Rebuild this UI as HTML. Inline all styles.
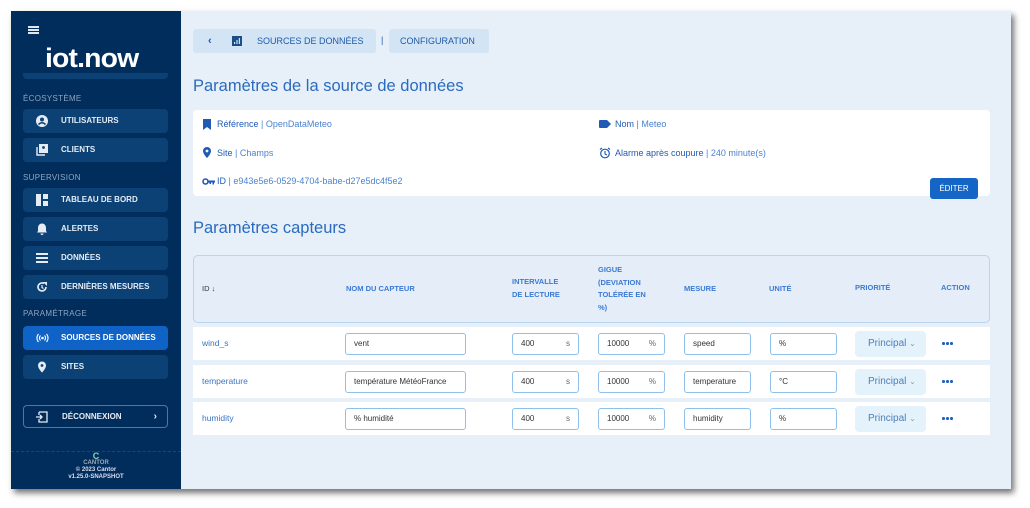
<!DOCTYPE html>
<html><head><meta charset="utf-8"><style>
*{box-sizing:border-box;margin:0;padding:0}
body{width:1030px;height:508px;background:#fff;font-family:"Liberation Sans",sans-serif;position:relative;overflow:hidden}
#frame{position:absolute;left:11px;top:11px;width:1000px;height:478px;background:#e7eff8;box-shadow:3px 4px 6px rgba(0,0,0,.55);overflow:hidden}
#side{position:absolute;left:0;top:0;width:170px;height:478px;background:#012d5c}
.a{position:absolute}
.nav{position:absolute;left:12px;width:145px;height:24px;background:#0c4176;border-radius:4px;color:#e6ecf4;font-size:8px;font-weight:bold;line-height:24px;padding-left:38px}
.nav svg{position:absolute;left:13px;top:6px}
.sec{position:absolute;left:12px;color:#8ea4bf;font-size:8px;letter-spacing:.3px}
.bc{position:absolute;top:18px;height:24px;background:#d3e5f5;border-radius:3px;color:#1d5aa8;font-size:9px;line-height:24px}
h2{position:absolute;font-weight:normal;font-size:16.5px;color:#2a6bc0}
.card{position:absolute;background:#fff;border-radius:4px}
.lbl{position:absolute;font-size:9px;color:#1f5bb5}
.lbl span{color:#4a82d0}
.th{position:absolute;font-size:7.5px;color:#3b7ad4;line-height:12.5px;font-weight:bold}
.row{position:absolute;left:182px;width:797px;height:33px;background:#fff}
.id{position:absolute;left:9px;top:11px;font-size:8.5px;color:#3b74c4}
.in{position:absolute;top:6px;height:22px;border:1px solid #8fc0ec;border-radius:3px;font-size:8px;color:#333;line-height:20px;padding-left:8px}
.in i{position:absolute;right:8px;font-style:normal;color:#666}
.sel{position:absolute;left:662px;top:4px;width:71px;height:26px;background:#e4f2fb;border-radius:4px;color:#4d7fb8;font-size:10px;line-height:26px;padding-left:13px}
.dots{position:absolute;left:749px;top:15px;width:2.5px;height:2.5px;border-radius:50%;background:#2060c0;box-shadow:4px 0 0 #2060c0,8px 0 0 #2060c0}
</style></head><body>
<div id="frame">
<div id="side">
 <div class="a" style="left:17px;top:15px;width:11px;height:2px;background:#dfe6ef;box-shadow:0 3px 0 #dfe6ef,0 6px 0 #dfe6ef"></div>
 <div class="a" style="left:34px;top:32px;color:#fff;font-size:27px;font-weight:bold;letter-spacing:-0.8px;transform:scaleX(1.05);transform-origin:left">iot.now</div>
 <div class="a" style="left:12px;top:62px;width:145px;height:6px;background:#0c4176;border-radius:0 0 4px 4px"></div>
 <div class="sec" style="top:83px">ÉCOSYSTÈME</div>
 <div class="nav" style="top:98px"><svg width="12" height="12" viewBox="0 0 12 12"><circle cx="6" cy="6" r="6" fill="#e6ecf4"/><circle cx="6" cy="4.5" r="2" fill="#0c4176"/><path d="M2.5 9.5Q6 6 9.5 9.5" stroke="#0c4176" stroke-width="1.6" fill="none"/></svg>UTILISATEURS</div>
 <div class="nav" style="top:127px"><svg width="12" height="12" viewBox="0 0 12 12"><rect x="3" y="0" width="9" height="9" fill="#e6ecf4"/><path d="M1 3v8h8" stroke="#e6ecf4" stroke-width="1.4" fill="none"/><circle cx="7.5" cy="3.5" r="1.4" fill="#0c4176"/></svg>CLIENTS</div>
 <div class="sec" style="top:162px">SUPERVISION</div>
 <div class="nav" style="top:177px"><svg width="12" height="12" viewBox="0 0 12 12"><rect x="0" y="0" width="5" height="12" fill="#e6ecf4"/><rect x="7" y="0" width="5" height="5" fill="#e6ecf4"/><rect x="7" y="7" width="5" height="5" fill="#e6ecf4"/></svg>TABLEAU DE BORD</div>
 <div class="nav" style="top:206px"><svg width="12" height="12" viewBox="0 0 12 12"><path d="M6 0.5c-2.5 0-4 2-4 4.5v3L1 9.5h10L10 8V5c0-2.5-1.5-4.5-4-4.5z M4.5 10.5h3a1.5 1.5 0 0 1-3 0z" fill="#e6ecf4"/></svg>ALERTES</div>
 <div class="nav" style="top:235px"><svg width="12" height="12" viewBox="0 0 12 12"><rect y="1" width="12" height="2" fill="#e6ecf4"/><rect y="5" width="12" height="2" fill="#e6ecf4"/><rect y="9" width="12" height="2" fill="#e6ecf4"/></svg>DONNÉES</div>
 <div class="nav" style="top:264px"><svg width="12" height="12" viewBox="0 0 12 12"><path d="M10 6A4 4 0 1 1 8 2.5" stroke="#e6ecf4" stroke-width="1.6" fill="none"/><path d="M7 1h4v4z" fill="#e6ecf4"/><path d="M6 4v2.5l1.5 1" stroke="#e6ecf4" stroke-width="1.2" fill="none"/></svg>DERNIÈRES MESURES</div>
 <div class="sec" style="top:298px">PARAMÉTRAGE</div>
 <div class="nav" style="top:315px;background:#0f62c6;color:#fff"><svg width="13" height="12" viewBox="0 0 13 12"><circle cx="6.5" cy="6" r="1.3" fill="#fff"/><path d="M4.5 3.5a3.5 3.5 0 0 0 0 5M8.5 3.5a3.5 3.5 0 0 1 0 5M2.5 2a6 6 0 0 0 0 8M10.5 2a6 6 0 0 1 0 8" stroke="#fff" stroke-width="1.1" fill="none"/></svg>SOURCES DE DONNÉES</div>
 <div class="nav" style="top:344px"><svg width="12" height="12" viewBox="0 0 12 12"><path d="M6 0.5a4 4 0 0 0-4 4c0 3 4 7 4 7s4-4 4-7a4 4 0 0 0-4-4z" fill="#e6ecf4"/><circle cx="6" cy="4.5" r="1.4" fill="#0c4176"/></svg>SITES</div>
 <div class="nav" style="top:394px;height:23px;background:transparent;border:1px solid #5a7396;line-height:21px"><svg width="12" height="12" viewBox="0 0 12 12" style="top:5px;left:12px"><path d="M3 1h8v10H3V8M3 4V1" stroke="#e6ecf4" stroke-width="1.3" fill="none"/><path d="M0 6h6M4 4l2 2-2 2" stroke="#e6ecf4" stroke-width="1.3" fill="none"/></svg>DÉCONNEXION<span style="position:absolute;right:10px;font-size:10px">›</span></div>
 <div class="a" style="left:0;top:440px;width:170px;border-top:1px dashed #1c4670"></div>
 <div class="a" style="left:0;top:442px;width:170px;text-align:center;color:#9ab;font-size:6px;line-height:7px;font-weight:bold"><div style="color:#8fd0b0;font-size:9px">C</div>CANTOR<br><span style="color:#dde">© 2023 Cantor<br>v1.25.0-SNAPSHOT</span></div>
</div>
<div class="bc" style="left:182px;width:183px"><span style="position:absolute;left:15px;font-weight:bold;font-size:11px">‹</span><svg style="position:absolute;left:39px;top:7px" width="10" height="10" viewBox="0 0 10 10"><rect width="10" height="10" fill="#1c4f86"/><rect x="2" y="6" width="1.2" height="2" fill="#d3e5f5"/><rect x="4.4" y="4" width="1.2" height="4" fill="#d3e5f5"/><rect x="6.8" y="2" width="1.2" height="6" fill="#d3e5f5"/></svg><span style="position:absolute;left:64px">SOURCES DE DONNÉES</span></div>
<div class="a" style="left:370px;top:24px;font-size:9px;color:#1d5aa8">|</div>
<div class="bc" style="left:378px;width:100px;padding-left:11px">CONFIGURATION</div>
<h2 style="left:182px;top:66px">Paramètres de la source de données</h2>
<div class="card" style="left:182px;top:99px;width:797px;height:86px">
 <svg class="a" style="left:10px;top:9px" width="8" height="11" viewBox="0 0 8 11"><path d="M0 0h8v11L4 8 0 11z" fill="#1f5bb5"/></svg>
 <div class="lbl" style="left:24px;top:9px">Référence <span>| OpenDataMeteo</span></div>
 <svg class="a" style="left:10px;top:37px" width="8" height="11" viewBox="0 0 8 11"><path d="M4 0a4 4 0 0 0-4 4c0 3 4 7 4 7s4-4 4-7a4 4 0 0 0-4-4z" fill="#1f5bb5"/><circle cx="4" cy="4" r="1.4" fill="#fff"/></svg>
 <div class="lbl" style="left:24px;top:38px">Site <span>| Champs</span></div>
 <svg class="a" style="left:9px;top:68px" width="13" height="7" viewBox="0 0 13 7"><circle cx="3.5" cy="3.5" r="2.5" stroke="#1f5bb5" stroke-width="1.6" fill="none"/><path d="M6 2.5h7v2h-1v2h-1.5v-2H9v1.5H7.5v-1.5H6z" fill="#1f5bb5"/></svg>
 <div class="lbl" style="left:24px;top:66px">ID <span>| e943e5e6-0529-4704-babe-d27e5dc4f5e2</span></div>
 <svg class="a" style="left:406px;top:10px" width="12" height="8" viewBox="0 0 12 8"><path d="M0 1a1 1 0 0 1 1-1h7l4 4-4 4H1a1 1 0 0 1-1-1z" fill="#1f5bb5"/></svg>
 <div class="lbl" style="left:422px;top:9px">Nom <span>| Meteo</span></div>
 <svg class="a" style="left:406px;top:37px" width="12" height="12" viewBox="0 0 12 12"><circle cx="6" cy="6.5" r="4.3" stroke="#1f5bb5" stroke-width="1.2" fill="none"/><path d="M6 4v3l2 1M1 2.5 3 1M11 2.5 9 1" stroke="#1f5bb5" stroke-width="1.1" fill="none"/></svg>
 <div class="lbl" style="left:422px;top:38px">Alarme après coupure <span>| 240 minute(s)</span></div>
 <div class="a" style="left:737px;top:68px;width:48px;height:21px;background:#1465c5;border-radius:3px;color:#fff;font-size:8px;line-height:21px;text-align:center">ÉDITER</div>
</div>
<h2 style="left:182px;top:208px">Paramètres capteurs</h2>
<div class="a" style="left:182px;top:244px;width:797px;height:68px;border:1px solid #b8d4ee;border-radius:5px;background:#e5eef8"></div>
<div class="th" style="left:191px;top:272px;color:#333;font-weight:normal">ID ↓</div>
<div class="th" style="left:335px;top:272px">NOM DU CAPTEUR</div>
<div class="th" style="left:501px;top:265px">INTERVALLE<br>DE LECTURE</div>
<div class="th" style="left:587px;top:253px">GIGUE<br>(DEVIATION<br>TOLÉRÉE EN<br>%)</div>
<div class="th" style="left:673px;top:272px">MESURE</div>
<div class="th" style="left:758px;top:272px">UNITÉ</div>
<div class="th" style="left:844px;top:271px">PRIORITÉ</div>
<div class="th" style="left:930px;top:271px">ACTION</div>

<div class="row" style="top:316px">
 <div class="id">wind_s</div>
 <div class="in" style="left:152px;width:121px">vent</div>
 <div class="in" style="left:319px;width:67px">400<i>s</i></div>
 <div class="in" style="left:405px;width:67px">10000<i>%</i></div>
 <div class="in" style="left:491px;width:67px">speed</div>
 <div class="in" style="left:577px;width:67px">%</div>
 <div class="sel">Principal <span style="font-size:8px;color:#999">⌄</span></div>
 <div class="dots"></div>
</div>
<div class="row" style="top:354px">
 <div class="id">temperature</div>
 <div class="in" style="left:152px;width:121px">température MétéoFrance</div>
 <div class="in" style="left:319px;width:67px">400<i>s</i></div>
 <div class="in" style="left:405px;width:67px">10000<i>%</i></div>
 <div class="in" style="left:491px;width:67px">temperature</div>
 <div class="in" style="left:577px;width:67px">°C</div>
 <div class="sel">Principal <span style="font-size:8px;color:#999">⌄</span></div>
 <div class="dots"></div>
</div>
<div class="row" style="top:391px">
 <div class="id">humidity</div>
 <div class="in" style="left:152px;width:121px">% humidité</div>
 <div class="in" style="left:319px;width:67px">400<i>s</i></div>
 <div class="in" style="left:405px;width:67px">10000<i>%</i></div>
 <div class="in" style="left:491px;width:67px">humidity</div>
 <div class="in" style="left:577px;width:67px">%</div>
 <div class="sel">Principal <span style="font-size:8px;color:#999">⌄</span></div>
 <div class="dots"></div>
</div>
</div>
</body></html>
